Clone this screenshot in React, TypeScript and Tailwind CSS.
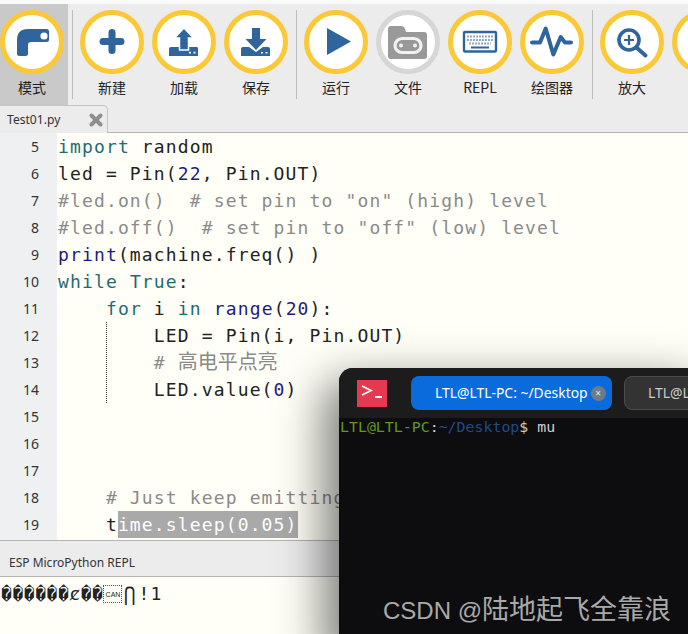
import type { ReactNode } from "react";

const BLUE = "#2f659c";

function ModeIcon() {
  return (
    <>
      <path d="M17 43.5V30Q17 19 28 19H46.5Q49 19 49 21.5V29.5Q49 32 46.5 32H31Q28 32 28 35V43.5Q28 46 25.5 46H19.5Q17 46 17 43.5Z" fill={BLUE} />
      <circle cx="44" cy="26" r="3.6" fill="#fff" />
    </>
  );
}

function PlusIcon() {
  return <path d="M32 22.5V40.5M23 31.5H41" stroke={BLUE} strokeWidth="7" strokeLinecap="round" fill="none" />;
}

function LoadIcon() {
  return (
    <>
      <path d="M17 39Q17 37 19 37H45Q46 37 46 39V46H17Z" fill={BLUE} />
      <path d="M32 18L41.5 28H36.5V40H27.5V28H22.5Z" fill={BLUE} stroke="#fff" strokeWidth="1.5" />
      <path d="M37 42.6H39M41.5 42.6H43.5" stroke="#fff" strokeWidth="1.6" />
    </>
  );
}

function SaveIcon() {
  return (
    <>
      <path d="M17 39Q17 37 19 37H25L32 42L39 37H44Q46 37 46 39V46H17Z" fill={BLUE} />
      <path d="M28 18H36V29H42.5L32 40L21.5 29H28Z" fill={BLUE} />
      <path d="M37 42.8H39M41.5 42.8H43.5" stroke="#fff" strokeWidth="1.6" />
    </>
  );
}

function RunIcon() {
  return <path d="M23 18L47 31.5L23 45Z" fill={BLUE} />;
}

function FilesIcon() {
  return (
    <>
      <path d="M12 19Q12 16 15 16H25Q28 16 29 19L30 22H48Q51 22 51 25V46Q51 49 48 49H15Q12 49 12 46Z" fill="#999" />
      <rect x="19" y="28.5" width="26" height="14" rx="7" fill="#999" stroke="#f2f2f2" strokeWidth="3.2" />
      <circle cx="25" cy="35.5" r="2" fill="#f2f2f2" />
      <circle cx="39" cy="35.5" r="2" fill="#f2f2f2" />
    </>
  );
}

function ReplIcon() {
  return (
    <>
      <rect x="16" y="22" width="32" height="19.5" rx="1" fill="none" stroke={BLUE} strokeWidth="2.4" />
      <path d="M19 26.5H45M19 30H45M21 33.5H43" stroke="#8fabc7" strokeWidth="1.8" strokeDasharray="2 1" />
      <path d="M23 37.5H41" stroke={BLUE} strokeWidth="2" />
    </>
  );
}

function PlotterIcon() {
  return (
    <path d="M12 32.5H20L25.7 18.5L33.3 44.5L40.7 27L45 32.5H51" fill="none" stroke={BLUE} strokeWidth="4" strokeLinejoin="round" strokeLinecap="round" />
  );
}

function ZoomIcon() {
  return (
    <>
      <circle cx="29" cy="30" r="10" fill="none" stroke={BLUE} strokeWidth="3.6" />
      <path d="M29 25V35M24 30H34" stroke={BLUE} strokeWidth="2.2" />
      <path d="M37 38L45.5 45.5" stroke={BLUE} strokeWidth="4" strokeLinecap="round" />
    </>
  );
}

function ZoomOutIcon() {
  return (
    <>
      <circle cx="29" cy="30" r="10" fill="none" stroke={BLUE} strokeWidth="3.6" />
      <path d="M24 30H34" stroke={BLUE} strokeWidth="2.2" />
      <path d="M37 38L45.5 45.5" stroke={BLUE} strokeWidth="4" strokeLinecap="round" />
    </>
  );
}

function ToolButton({ label, children, grey }: { label?: string; children: ReactNode; grey?: boolean }) {
  return (
    <div className="w-[72px] shrink-0 flex flex-col items-center pt-[6px]">
      <div
        className={`w-[64px] h-[64px] shrink-0 rounded-full bg-white border-[5px] ${grey ? "border-[#d6d6d6]" : "border-[#fbc935]"}`}
      >
        <svg viewBox="5 5 54 54" className="w-[54px] h-[54px]">
          {children}
        </svg>
      </div>
      <span className="mt-[3px] text-[14px] leading-[20px] text-[#222]">{label}</span>
    </div>
  );
}

function Sep() {
  return <div className="ml-[4px] mr-[3px] mt-[6px] h-[89px] w-px shrink-0 bg-[#bdbdbd]" />;
}

function Kw({ children }: { children: ReactNode }) {
  return <span className="text-[#1f6b73]">{children}</span>;
}
function Fn({ children }: { children: ReactNode }) {
  return <span className="text-[#1c1c80]">{children}</span>;
}
function Cm({ children }: { children: ReactNode }) {
  return <span className="text-[#8a8a8a]">{children}</span>;
}

const lines: [number, ReactNode][] = [
  [5, <><Kw>import</Kw> random</>],
  [6, <>led = Pin(<Fn>22</Fn>, Pin.OUT)</>],
  [7, <Cm>#led.on()  # set pin to "on" (high) level</Cm>],
  [8, <Cm>#led.off()  # set pin to "off" (low) level</Cm>],
  [9, <><Fn>print</Fn>(machine.freq() )</>],
  [10, <><Kw>while</Kw> <Kw>True</Kw>:</>],
  [11, <>    <Kw>for</Kw> i <Kw>in</Kw> <Fn>range</Fn>(<Fn>20</Fn>):</>],
  [12, <>        LED = Pin(i, Pin.OUT)</>],
  [13, <Cm>        # <span className="tracking-normal text-[20px] leading-[20px] font-['Noto_Sans_CJK_SC']">高电平点亮</span></Cm>],
  [14, <>        LED.value(<Fn>0</Fn>)</>],
  [15, ""],
  [16, ""],
  [17, ""],
  [18, <Cm>    # Just keep emitting</Cm>],
  [19, <>    t<span className="inline-block h-[27px] bg-[#a9a9a9] text-white">ime.sleep(0.05)</span></>],
];

export default function App() {
  return (
    <div className="relative w-[688px] h-[634px] overflow-hidden flex flex-col bg-[#ececec] font-['Noto_Sans_CJK_SC','Noto_Sans',sans-serif]">
      <div className="h-[4px] shrink-0 bg-[#fafafa]" />

      {/* Toolbar */}
      <div className="h-[101px] shrink-0 flex">
        <div className="w-[68px] shrink-0 bg-[#c9c9c9] flex flex-col items-center pr-[4px] pt-[6px]">
          <div className="w-[64px] h-[64px] shrink-0 rounded-full bg-white border-[5px] border-[#fbc935]">
            <svg viewBox="5 5 54 54" className="w-[54px] h-[54px]">
              <ModeIcon />
            </svg>
          </div>
          <span className="mt-[3px] text-[14px] leading-[20px] text-[#222]">模式</span>
        </div>
        <Sep />
        <ToolButton label="新建"><PlusIcon /></ToolButton>
        <ToolButton label="加载"><LoadIcon /></ToolButton>
        <ToolButton label="保存"><SaveIcon /></ToolButton>
        <Sep />
        <ToolButton label="运行"><RunIcon /></ToolButton>
        <ToolButton label="文件" grey><FilesIcon /></ToolButton>
        <ToolButton label="REPL"><ReplIcon /></ToolButton>
        <ToolButton label="绘图器"><PlotterIcon /></ToolButton>
        <Sep />
        <ToolButton label="放大"><ZoomIcon /></ToolButton>
        <ToolButton label="缩小"><ZoomOutIcon /></ToolButton>
      </div>

      {/* Tabs */}
      <div className="h-[28px] shrink-0 border-b border-[#b4b4b4]">
        <div className="w-[108px] h-[28px] flex items-center justify-between pl-[7px] pr-[4px] pt-[1px] border-t border-r border-[#c4c4c4] rounded-tr-[5px] bg-[#ececec]">
          <span className="text-[12.1px] text-[#333] font-['Noto_Sans']">Test01.py</span>
          <svg viewBox="0 0 14 14" className="w-[14px] h-[14px]">
            <path d="M2.5 2.5L11.5 11.5M11.5 2.5L2.5 11.5" stroke="#8f8f8f" strokeWidth="4" strokeLinecap="round" />
          </svg>
        </div>
      </div>

      {/* Editor */}
      <div className="relative h-[407px] shrink-0 flex overflow-hidden bg-[#fffff7]">
        <div className="w-[57px] shrink-0 bg-[#eef0f1] flex flex-col">
          {lines.map(([n]) => (
            <div key={n} className="h-[27.03px] pr-[18px] text-right text-[14px] leading-[27.03px] text-[#333] font-['Noto_Sans']">
              {n}
            </div>
          ))}
        </div>
        <div className="pl-[1px] flex flex-col font-['DejaVu_Sans_Mono','Noto_Sans_CJK_SC',monospace] text-[18px] tracking-[1.14px] text-[#222]">
          {lines.map(([n, code]) => (
            <div key={n} className="h-[27.03px] leading-[27.03px] whitespace-pre">
              {code}
            </div>
          ))}
        </div>
        <div className="absolute left-[106px] top-[189px] h-[81px] border-l border-dotted border-[#333]" />
      </div>

      {/* REPL */}
      <div className="h-[37px] shrink-0 border-t border-b border-[#b4b4b4] flex items-center pl-[9px] pt-[8px] text-[12px] text-[#333] font-['Noto_Sans']">
        ESP MicroPython REPL
      </div>
      <div className="h-[57px] shrink-0 bg-[#fffff7] pt-[6px] pl-[1px] flex items-start font-['DejaVu_Sans_Mono',monospace] text-[18px] leading-[22px] text-[#222]">
        <span className="tracking-[0.55px]">������ȼ��</span>
        <span className="mt-[2px] w-[19px] h-[18px] shrink-0 border border-dotted border-[#555] flex items-center justify-center text-[7px] leading-none font-['Liberation_Sans']">
          CAN
        </span>
        <span className="w-[14px] shrink-0 text-center text-[19px]">⋂</span>
        <span className="tracking-[1.14px] pl-[2px]">!1</span>
      </div>

      {/* Terminal window floating over the editor */}
      <div className="absolute left-[339px] top-[368px] w-[349px] h-[266px] rounded-tl-[14px] overflow-hidden bg-[#0d0d0f] flex flex-col shadow-[-6px_22px_45px_10px_rgba(0,0,0,0.5)]">
        <div className="h-[50px] shrink-0 bg-[#1c1c1c] flex items-start pl-[18px] pt-[8px]">
          <svg viewBox="0 0 30 27" className="mt-[4px] w-[30px] h-[27px] shrink-0">
            <rect width="30" height="27" fill="#e6394f" />
            <path d="M5 6L14 10.5L5 15M18 17H25" fill="none" stroke="#fff" strokeWidth="1.8" />
          </svg>
          <div className="ml-[24px] w-[201px] h-[34px] shrink-0 rounded-[8px] bg-[#0a6bdc] flex items-center pl-[24px] text-[13.9px] text-white whitespace-nowrap font-['Noto_Sans']">
            LTL@LTL-PC: ~/Desktop
            <span className="ml-[3px] w-[15px] h-[15px] shrink-0 rounded-full bg-[#6e7b88] text-[#e8e8e8] flex items-center justify-center text-[10px] leading-none">
              ×
            </span>
          </div>
          <div className="ml-[12px] w-[120px] h-[34px] shrink-0 rounded-[8px] bg-[#333] border border-[#4b4b4b] flex items-center pl-[23px] text-[13.9px] text-[#ccc] whitespace-nowrap font-['Noto_Sans']">
            LTL@LTL-PC
          </div>
        </div>
        <div className="pl-[1px] font-['DejaVu_Sans_Mono',monospace] text-[14.9px] leading-[18px] whitespace-pre text-[#cfcfcf]">
          <span className="text-[#5f9a1c]">LTL@LTL-PC</span>:<span className="text-[#1f4a8a]">~/Desktop</span>$ mu
        </div>
      </div>

      {/* Watermark */}
      <div className="absolute left-[383px] top-[593px] text-[24px] leading-[34px] text-[#a9a9a9] whitespace-nowrap font-['Liberation_Sans','Noto_Sans_CJK_SC',sans-serif]">
        CSDN @<span className="text-[27px]">陆地起飞全靠浪</span>
      </div>
    </div>
  );
}
